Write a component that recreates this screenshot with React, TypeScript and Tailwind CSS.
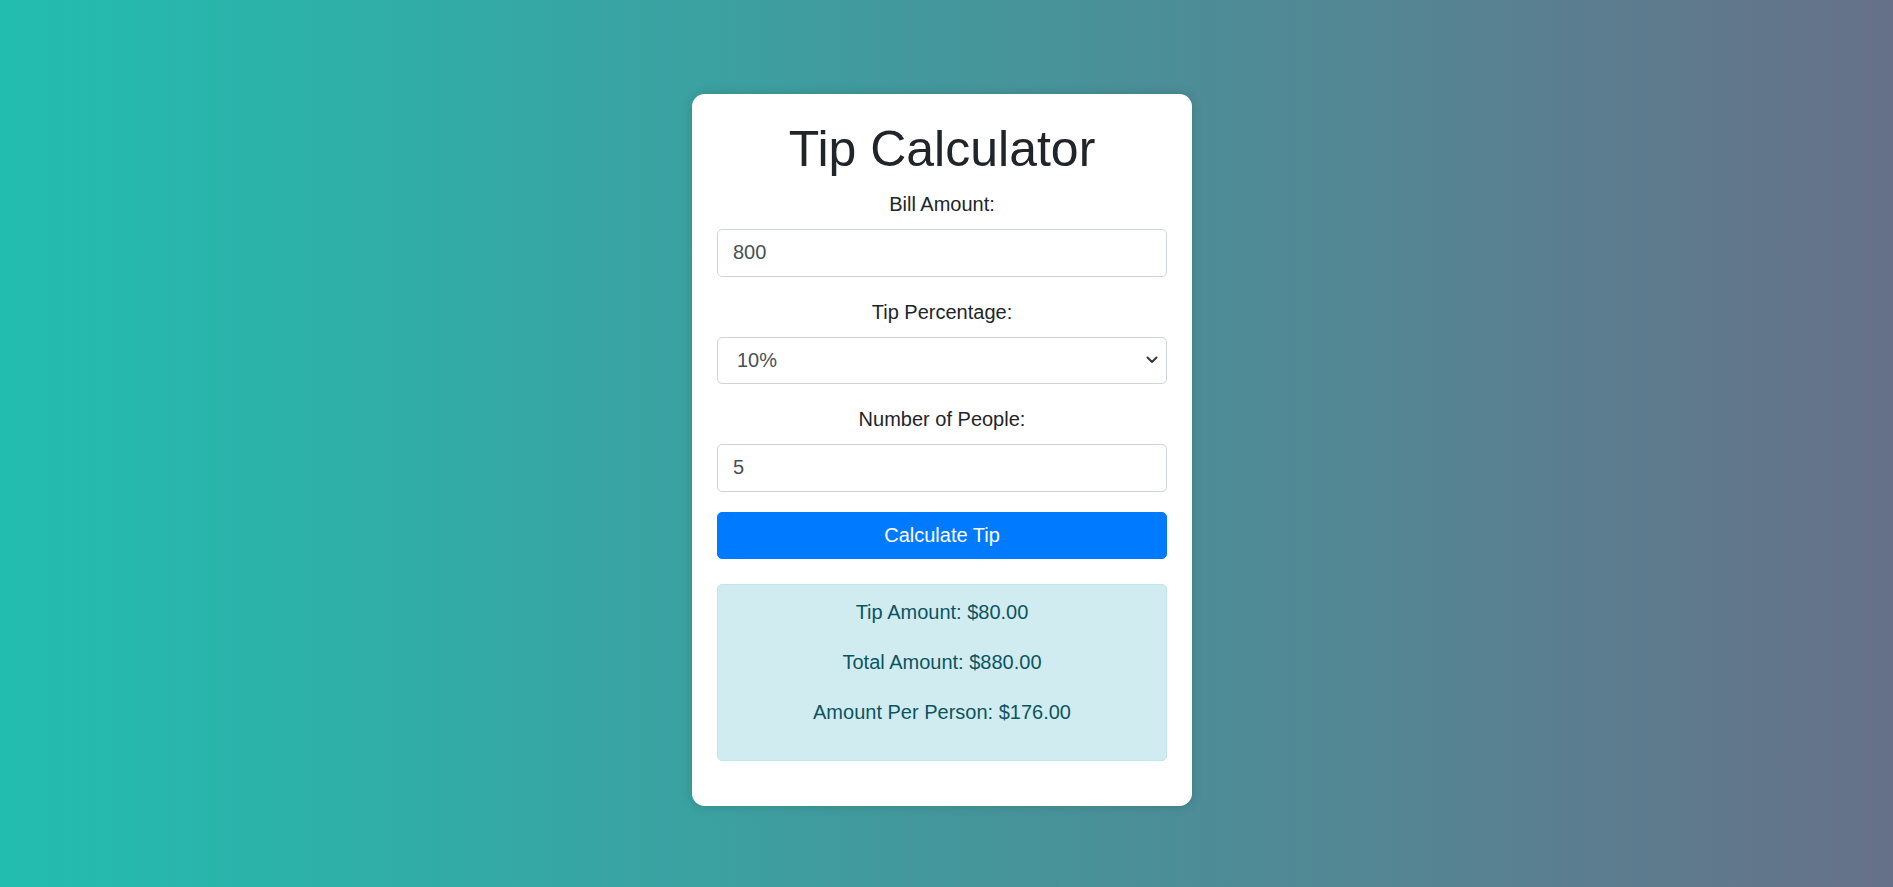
import React, { useState } from "react";

export default function App() {
  const [bill, setBill] = useState("800");
  const [tip, setTip] = useState("10");
  const [people, setPeople] = useState("5");
  const [result, setResult] = useState({ tip: 80, total: 880, per: 176 });

  const calc = () => {
    const b = parseFloat(bill) || 0;
    const t = parseFloat(tip) || 0;
    const p = parseInt(people) || 1;
    const ta = (b * t) / 100;
    setResult({ tip: ta, total: b + ta, per: (b + ta) / p });
  };

  const inputCls =
    "block w-full h-[47.5px] px-[15px] text-[20px] leading-[30px] text-[#495057] text-left bg-white border-[1.25px] border-[#ced4da] rounded-[5px] outline-none";

  return (
    <div
      className="min-h-screen w-full flex justify-center items-start pt-[94px] pr-[9px] bg-[linear-gradient(to_right,#22bdaf,#667189)]"
      style={{ fontFamily: '"Liberation Sans", Arial, sans-serif' }}
    >
      <div className="w-[500px] bg-white rounded-[12.5px] p-[25px] shadow-[0_0_12px_rgba(0,0,0,0.15)] text-center text-[#212529]">
        <h1 className="text-[50px] leading-[60px] mb-[10px] font-normal">Tip Calculator</h1>

        <div className="mb-[20px]">
          <label className="block text-[20px] leading-[30px] mb-[10px]">Bill Amount:</label>
          <input className={inputCls} type="text" value={bill} onChange={(e) => setBill(e.target.value)} />
        </div>

        <div className="mb-[20px]">
          <label className="block text-[20px] leading-[30px] mb-[10px]">Tip Percentage:</label>
          <div className="relative">
            <select
              className={inputCls + " appearance-none pl-[19px]"}
              value={tip}
              onChange={(e) => setTip(e.target.value)}
            >
              <option value="5">5%</option>
              <option value="10">10%</option>
              <option value="15">15%</option>
              <option value="20">20%</option>
            </select>
            <svg
              className="absolute right-[9px] top-1/2 -translate-y-1/2 pointer-events-none"
              width="12"
              height="8"
              viewBox="0 0 12 8"
              fill="none"
            >
              <path d="M1.5 1.5 L6 6 L10.5 1.5" stroke="#3a3a3a" strokeWidth="2" strokeLinecap="round" strokeLinejoin="round" />
            </svg>
          </div>
        </div>

        <div className="mb-[20px]">
          <label className="block text-[20px] leading-[30px] mb-[10px]">Number of People:</label>
          <input className={inputCls} type="text" value={people} onChange={(e) => setPeople(e.target.value)} />
        </div>

        <button
          onClick={calc}
          className="block w-full h-[47.5px] bg-[#007bff] text-white text-[20px] leading-[30px] rounded-[5px] border-[1.25px] border-[#007bff]"
        >
          Calculate Tip
        </button>

        <div className="mt-[25px] mb-[20px] bg-[#d1ecf1] border-[1.25px] border-[#bee5eb] rounded-[5px] pt-[11.5px] pb-[13.5px] px-[25px] text-[#0c5460] text-[20px] leading-[30px]">
          <p className="mb-[20px]">Tip Amount: ${result.tip.toFixed(2)}</p>
          <p className="mb-[20px]">Total Amount: ${result.total.toFixed(2)}</p>
          <p className="mb-[20px]">Amount Per Person: ${result.per.toFixed(2)}</p>
        </div>
      </div>
    </div>
  );
}
